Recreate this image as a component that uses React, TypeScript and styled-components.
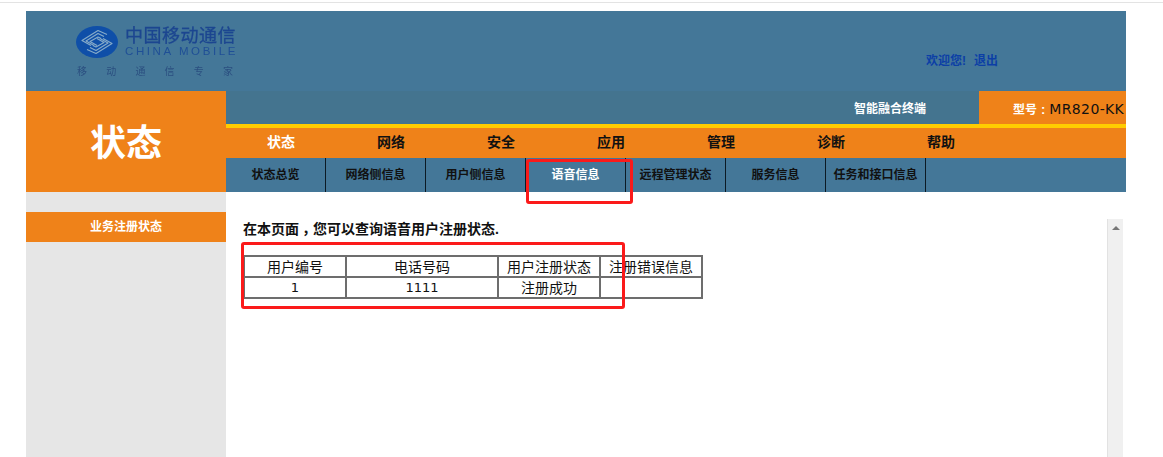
import React from 'react'
import styled, { createGlobalStyle } from 'styled-components'

const FONT = `"Liberation Sans", "Noto Sans CJK SC", sans-serif`
const BLUE = '#447798'
const ORANGE = '#ef8219'

const GlobalStyle = createGlobalStyle`
  html, body {
    margin: 0;
    padding: 0;
    background: #fff;
    height: 100%;
    overflow: hidden;
  }
  body {
    font-family: ${FONT};
    color: #000;
  }
`

const Page = styled.div`
  position: relative;
  width: 1163px;
  height: 457px;
  overflow: hidden;
`

const TopRule = styled.div`
  height: 1px;
  margin-top: 2px;
  background: #e3e3e3;
`

const Frame = styled.div`
  width: 1100px;
  margin: 8px 0 0 26px;
`

const Header = styled.header`
  height: 80px;
  background: ${BLUE};
  display: flex;
  justify-content: space-between;
`

const Logo = styled.div`
  display: grid;
  grid-template-columns: 42px auto;
  grid-template-rows: auto auto;
  column-gap: 7px;
  align-self: flex-start;
  padding: 15px 0 0 50px;
  filter: blur(0.35px);
`

const LogoNames = styled.div`
  display: flex;
  flex-direction: column;
  padding-top: 2px;
`

const LogoCn = styled.span`
  font-size: 18px;
  line-height: 17px;
  letter-spacing: 0.5px;
  color: #1c4690;
  -webkit-text-stroke: 0.3px #1c4690;
`

const LogoEn = styled.span`
  font-size: 11.5px;
  line-height: 12px;
  letter-spacing: 2.6px;
  color: #1f4f96;
  white-space: nowrap;
`

const LogoSlogan = styled.span`
  grid-column: 1 / 3;
  display: flex;
  justify-content: space-between;
  width: 156px;
  margin: 8px 0 0 1px;
  font-size: 10px;
  line-height: 12px;
  color: #2b4f80;
`

const Welcome = styled.div`
  display: flex;
  gap: 8px;
  margin: 42px 128px 0 0;
  font-size: 12px;
  line-height: 16px;
  font-weight: bold;
  color: #0c3fa6;
`

const Band = styled.div`
  display: flex;
`

const BandTitle = styled.div`
  width: 200px;
  height: 101px;
  flex: none;
  background: ${ORANGE};
  color: #fff;
  font-size: 36px;
  font-weight: bold;
  line-height: 106px;
  text-align: center;
`

const BandMain = styled.div`
  flex: 1;
  min-width: 0;
`

const InfoBar = styled.div`
  height: 33px;
  background: #44748f;
  display: flex;
  justify-content: flex-end;
  color: #fff;
  font-size: 12px;
  font-weight: bold;
  line-height: 37px;
`

const ProductName = styled.span`
  margin-right: 53px;
`

const ModelBox = styled.div`
  width: 147px;
  background: ${ORANGE};
  padding-left: 34px;
  box-sizing: border-box;
  white-space: nowrap;
  overflow: hidden;
`

const ModelColon = styled.span`
  margin: 0 4px;
  font-size: 13px;
`

const ModelValue = styled.span`
  font-family: "DejaVu Sans", sans-serif;
  font-size: 14px;
  letter-spacing: 0.35px;
  font-weight: normal;
  color: #111;
`

const MainNav = styled.nav`
  height: 30px;
  box-sizing: content-box;
  border-top: 4px solid #ffcc00;
  background: ${ORANGE};
  display: flex;
`

const MainItem = styled.a<{ $active?: boolean }>`
  width: 110px;
  text-align: center;
  font-size: 14px;
  font-weight: bold;
  line-height: 28px;
  color: ${p => (p.$active ? '#fff' : '#111')};
`

const SubNav = styled.nav`
  height: 34px;
  background: ${BLUE};
  display: flex;
`

const SubItem = styled.a<{ $active?: boolean }>`
  width: 100px;
  box-sizing: border-box;
  border-right: 1px solid #0c1a24;
  text-align: center;
  font-size: 12px;
  font-weight: bold;
  line-height: 35px;
  color: ${p => (p.$active ? '#fff' : '#111')};
`

const Body = styled.div`
  display: flex;
  height: 265px;
`

const Sidebar = styled.aside`
  width: 200px;
  flex: none;
  background: #e6e6e6;
  padding-top: 20px;
  box-sizing: border-box;
`

const SideItem = styled.div`
  height: 30px;
  background: ${ORANGE};
  color: #fff;
  font-size: 12px;
  font-weight: bold;
  line-height: 31px;
  text-align: center;
`

const Content = styled.main`
  flex: 1;
  display: flex;
  min-width: 0;
  padding-top: 27px;
  box-sizing: border-box;
`

const ContentInner = styled.div`
  flex: 1;
  padding-left: 17px;
`

const Intro = styled.p`
  margin: 0 0 16px;
  font-family: "Liberation Sans", "Noto Sans CJK TC", sans-serif;
  font-size: 14px;
  font-weight: bold;
  line-height: 20px;
  color: #111;
`

const IntroComma = styled.span`
  display: inline-block;
  transform: translateY(4px);
`

const StatusTable = styled.table`
  width: 458px;
  border-collapse: collapse;
  table-layout: fixed;
  margin-left: 0;
  border: 2px solid #6d6d6d;
  font-size: 14px;
  color: #111;
`

const HeadCell = styled.th`
  height: 21px;
  padding: 0;
  border: 2px solid #6d6d6d;
  box-sizing: border-box;
  font-weight: normal;
  text-align: center;
  line-height: 18px;
`

const DataCell = styled.td<{ $numeric?: boolean }>`
  height: 21px;
  padding: 0;
  border: 2px solid #6d6d6d;
  box-sizing: border-box;
  text-align: center;
  line-height: 18px;
  font-family: ${p => (p.$numeric ? '"DejaVu Sans", sans-serif' : 'inherit')};
  font-size: ${p => (p.$numeric ? '13px' : '14px')};
`

const Scrollbar = styled.div`
  width: 16px;
  margin-right: 3px;
  flex: none;
  background: #f0f0f0;
  border-left: 1px solid #e2e2e2;
  box-sizing: border-box;
  display: flex;
  justify-content: center;
  padding-top: 7px;
`

const ScrollArrow = styled.span`
  width: 0;
  height: 0;
  border-left: 4px solid transparent;
  border-right: 4px solid transparent;
  border-bottom: 4px solid #777;
`

const Callout = styled.div<{ $x: number; $y: number; $w: number; $h: number }>`
  position: absolute;
  left: ${p => p.$x}px;
  top: ${p => p.$y}px;
  width: ${p => p.$w}px;
  height: ${p => p.$h}px;
  box-sizing: border-box;
  border: 3px solid #fb1a1a;
  border-radius: 3px;
`

const strands = (
  <>
    <path d="M31 8.5 L22 4.5 L6 14.5 L15 19.5" />
    <path d="M28 10.5 L22 7.5 L10 15 L18 19.5" />
    <path d="M25 12.5 L22 11 L14 15.5 L21 19.5" />
  </>
)

const LogoMark = () => (
  <svg width="42" height="32" viewBox="0 0 42 32">
    <ellipse cx="21" cy="16" rx="21" ry="16" fill="#0f4fa8" />
    <g fill="none" stroke="#86abc9" strokeWidth="1.2" strokeLinejoin="round">
      {strands}
      <g transform="rotate(180 21 16)">{strands}</g>
    </g>
  </svg>
)

const mainItems = ['状态', '网络', '安全', '应用', '管理', '诊断', '帮助']
const subItems = ['状态总览', '网络侧信息', '用户侧信息', '语音信息', '远程管理状态', '服务信息', '任务和接口信息']
const slogan = ['移', '动', '通', '信', '专', '家']

const App: React.FC = () => (
  <Page>
    <GlobalStyle />
    <TopRule />
    <Frame>
      <Header>
        <Logo>
          <LogoMark />
          <LogoNames>
            <LogoCn>中国移动通信</LogoCn>
            <LogoEn>CHINA MOBILE</LogoEn>
          </LogoNames>
          <LogoSlogan>
            {slogan.map(c => (
              <span key={c}>{c}</span>
            ))}
          </LogoSlogan>
        </Logo>
        <Welcome>
          <span>欢迎您!</span>
          <span>退出</span>
        </Welcome>
      </Header>
      <Band>
        <BandTitle>状态</BandTitle>
        <BandMain>
          <InfoBar>
            <ProductName>智能融合终端</ProductName>
            <ModelBox>
              型号<ModelColon>:</ModelColon><ModelValue>MR820-KK</ModelValue>
            </ModelBox>
          </InfoBar>
          <MainNav>
            {mainItems.map((item, i) => (
              <MainItem key={item} $active={i === 0}>{item}</MainItem>
            ))}
          </MainNav>
          <SubNav>
            {subItems.map((item, i) => (
              <SubItem key={item} $active={i === 3}>{item}</SubItem>
            ))}
          </SubNav>
        </BandMain>
      </Band>
      <Body>
        <Sidebar>
          <SideItem>业务注册状态</SideItem>
        </Sidebar>
        <Content>
          <ContentInner>
            <Intro>在本页面<IntroComma>，</IntroComma>您可以查询语音用户注册状态.</Intro>
            <StatusTable>
              <colgroup>
                <col style={{ width: 102 }} />
                <col style={{ width: 152 }} />
                <col style={{ width: 102 }} />
                <col style={{ width: 102 }} />
              </colgroup>
              <thead>
                <tr>
                  <HeadCell>用户编号</HeadCell>
                  <HeadCell>电话号码</HeadCell>
                  <HeadCell>用户注册状态</HeadCell>
                  <HeadCell>注册错误信息</HeadCell>
                </tr>
              </thead>
              <tbody>
                <tr>
                  <DataCell $numeric>1</DataCell>
                  <DataCell $numeric>1111</DataCell>
                  <DataCell>注册成功</DataCell>
                  <DataCell></DataCell>
                </tr>
              </tbody>
            </StatusTable>
          </ContentInner>
          <Scrollbar>
            <ScrollArrow />
          </Scrollbar>
        </Content>
      </Body>
    </Frame>
    <Callout $x={526} $y={159} $w={107} $h={45} />
    <Callout $x={241} $y={242} $w={384} $h={67} />
  </Page>
)

export default App
